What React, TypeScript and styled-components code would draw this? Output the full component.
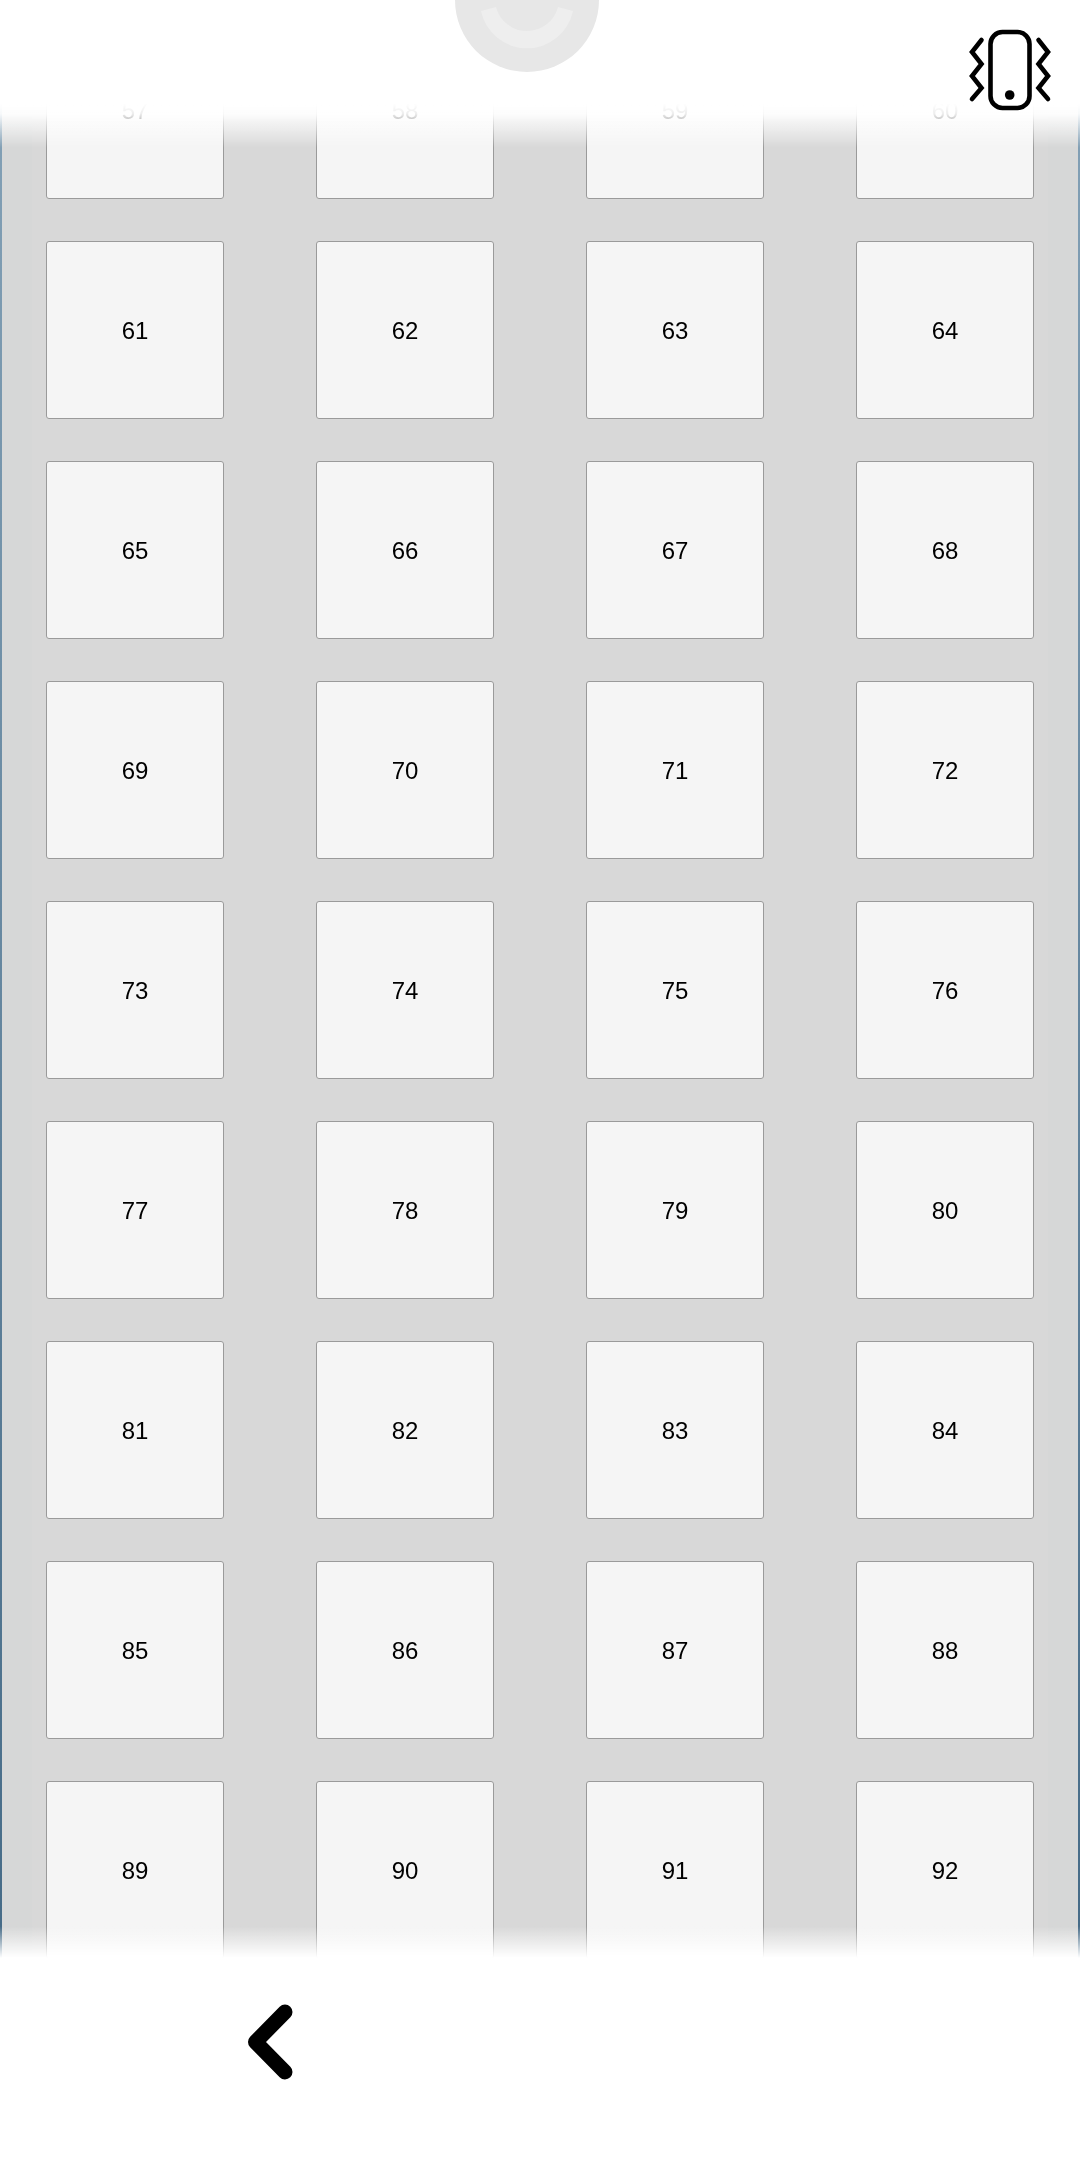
import React from 'react';
import styled, { createGlobalStyle } from 'styled-components';

const GlobalStyle = createGlobalStyle`
    html, body {
        margin: 0;
        padding: 0;
        background: #ffffff;
        font-family: "Liberation Sans", Arial, sans-serif;
    }
`;

const seats = Array.from({ length: 40 }, (_, i) => i + 57);

const App: React.FC = () => {
    return (
        <Screen>
            <GlobalStyle />
            <SeatGrid>
                {seats.map((seat) => (
                    <Seat key={seat}>{seat}</Seat>
                ))}
            </SeatGrid>

            <TopBar>
                <Spinner viewBox="0 0 144 72" aria-hidden="true">
                    <circle cx="72" cy="0" r="72" fill="#e7e7e7" />
                    <path d="M26 11 A47 47 0 0 0 118 11 L103 7 A32 32 0 0 1 41 7 Z" fill="#eeeeee" />
                </Spinner>
                <VibrateButton viewBox="0 0 140 140" aria-label="vibrate">
                    <rect x="50.5" y="32" width="39" height="76" rx="12" fill="none" stroke="#000" strokeWidth="4.6" />
                    <circle cx="69.7" cy="95" r="4.8" fill="#000" />
                    <Zigzag d="M41.5 40 L32 52 L41.5 64 L32 76 L41.5 88 L32 99" />
                    <Zigzag d="M98.5 40 L108 52 L98.5 64 L108 76 L98.5 88 L108 99" />
                </VibrateButton>
            </TopBar>

            <BottomBar>
                <BackButton viewBox="0 0 60 85" aria-label="back">
                    <path d="M50 13 L20.5 43 L50 73" fill="none" stroke="#000" strokeWidth="15" strokeLinecap="round" strokeLinejoin="round" />
                </BackButton>
            </BottomBar>
        </Screen>
    );
};

const Screen = styled.div`
    position: relative;
    width: 1080px;
    height: 2160px;
    overflow: hidden;
    background:
        linear-gradient(to bottom, #86a3b8, #3f6582) left top / 2px 100% no-repeat,
        linear-gradient(to bottom, #86a3b8, #3f6582) right top / 2px 100% no-repeat,
        linear-gradient(to right, #d6d7d7 0, #d6d7d7 32px, #d8d8d8 32px, #d8d8d8 1048px, #d6d7d7 1048px, #d6d7d7 100%);
`;

const SeatGrid = styled.div`
    display: grid;
    grid-template-columns: repeat(4, 178px);
    grid-auto-rows: 178px;
    column-gap: 92px;
    row-gap: 42px;
    padding: 21px 0 0 46px;
    will-change: transform;
`;

const Seat = styled.div`
    box-sizing: border-box;
    display: flex;
    align-items: center;
    justify-content: center;
    padding-top: 2px;
    background: #f5f5f5;
    border: 1px solid #9a9a9a;
    border-radius: 3px;
    color: #000000;
    font-size: 24px;
`;

const TopBar = styled.div`
    position: absolute;
    top: 0;
    left: 0;
    right: 0;
    height: 148px;
    background: linear-gradient(to bottom, #ffffff 0, #ffffff 70%, rgba(255, 255, 255, 0.93) 77%, rgba(255, 255, 255, 0) 100%);
`;

const Spinner = styled.svg`
    position: absolute;
    top: 0;
    left: 455px;
    width: 144px;
    height: 72px;
`;

const VibrateButton = styled.svg`
    position: absolute;
    top: 0;
    right: 0;
    width: 140px;
    height: 140px;
`;

const Zigzag = styled.path`
    fill: none;
    stroke: #000000;
    stroke-width: 4.6;
    stroke-linecap: round;
    stroke-linejoin: miter;
`;

const BottomBar = styled.div`
    position: absolute;
    left: 0;
    right: 0;
    bottom: 0;
    height: 234px;
    display: flex;
    align-items: flex-start;
    padding: 73px 0 0 235px;
    box-sizing: border-box;
    background: linear-gradient(to bottom, rgba(255, 255, 255, 0) 0, #ffffff 32px, #ffffff 100%);
`;

const BackButton = styled.svg`
    width: 60px;
    height: 85px;
`;

export default App;
